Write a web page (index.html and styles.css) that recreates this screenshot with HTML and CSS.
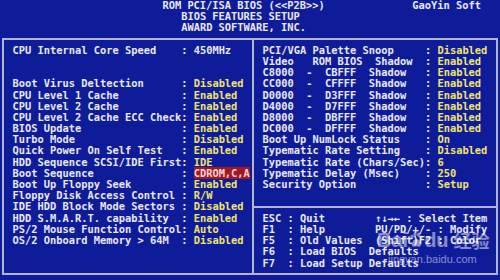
FILE: index.html
```html
<!DOCTYPE html>
<html lang="en">
<head>
  <meta charset="UTF-8">
  <title>BIOS Features Setup</title>
  <link rel="stylesheet" href="styles.css">
</head>
<body>
  <div class="screen">

    <header class="heading">
      <div class="line"><span class="heading-title">ROM PCI/ISA BIOS (&lt;&lt;P2B&gt;&gt;)</span><span class="heading-brand">GaoYin Soft</span></div>
      <div class="line heading-sub">BIOS FEATURES SETUP</div>
      <div class="line heading-sub">AWARD SOFTWARE, INC.</div>
    </header>

    <main class="frame">
      <!-- left column -->
      <section class="panel panel-left">
        <div class="line"><span class="label">CPU Internal Core Speed</span>: <span class="plain">450MHz</span></div>
        <div class="line"></div>
        <div class="line"></div>
        <div class="line"><span class="label">Boot Virus Deltection</span>: <span class="value">Disabled</span></div>
        <div class="line"><span class="label">CPU Level 1 Cache</span>: <span class="value">Enabled</span></div>
        <div class="line"><span class="label">CPU Level 2 Cache</span>: <span class="value">Enabled</span></div>
        <div class="line"><span class="label">CPU Level 2 Cache ECC Check</span>: <span class="value">Enabled</span></div>
        <div class="line"><span class="label">BIOS Update</span>: <span class="value">Enabled</span></div>
        <div class="line"><span class="label">Turbo Mode</span>: <span class="value">Disabled</span></div>
        <div class="line"><span class="label">Quick Power On Self Test</span>: <span class="value">Enabled</span></div>
        <div class="line"><span class="label">HDD Sequence SCSI/IDE First</span>: <span class="value">IDE</span></div>
        <div class="line"><span class="label">Boot Sequence</span>: <span class="value selected">CDROM,C,A</span></div>
        <div class="line"><span class="label">Boot Up Floppy Seek</span>: <span class="value">Enabled</span></div>
        <div class="line"><span class="label">Floppy Disk Access Control</span>: <span class="value">R/W</span></div>
        <div class="line"><span class="label">IDE HDD Block Mode Sectors</span>: <span class="value">Disabled</span></div>
        <div class="line"><span class="label">HDD S.M.A.R.T. capability</span>: <span class="value">Enabled</span></div>
        <div class="line"><span class="label">PS/2 Mouse Function Control</span>: <span class="value">Auto</span></div>
        <div class="line"><span class="label">OS/2 Onboard Memory &gt; 64M</span>: <span class="value">Disabled</span></div>
      </section>

      <!-- right column -->
      <section class="panel panel-right">
        <div class="settings">
          <div class="line"><span class="label label-wide">PCI/VGA Palette Snoop</span>: <span class="value">Disabled</span></div>
          <div class="line"><span class="label label-wide">Video   ROM BIOS  Shadow</span>: <span class="value">Enabled</span></div>
          <div class="line"><span class="label label-wide">C8000  -  CBFFF  Shadow</span>: <span class="value">Enabled</span></div>
          <div class="line"><span class="label label-wide">CC000  -  CFFFF  Shadow</span>: <span class="value">Enabled</span></div>
          <div class="line"><span class="label label-wide">D0000  -  D3FFF  Shadow</span>: <span class="value">Enabled</span></div>
          <div class="line"><span class="label label-wide">D4000  -  D7FFF  Shadow</span>: <span class="value">Enabled</span></div>
          <div class="line"><span class="label label-wide">D8000  -  DBFFF  Shadow</span>: <span class="value">Enabled</span></div>
          <div class="line"><span class="label label-wide">DC000  -  DFFFF  Shadow</span>: <span class="value">Enabled</span></div>
          <div class="line"><span class="label label-wide">Boot Up NumLock Status</span>: <span class="value">On</span></div>
          <div class="line"><span class="label label-wide">Typematic Rate Setting</span>: <span class="value">Disabled</span></div>
          <div class="line"><span class="label label-wide">Typematic Rate (Chars/Sec)</span>: <span class="value">6</span></div>
          <div class="line"><span class="label label-wide">Typematic Delay (Msec)</span>: <span class="value">250</span></div>
          <div class="line"><span class="label label-wide">Security Option</span>: <span class="value">Setup</span></div>
        </div>
        <div class="keys">
          <div class="line">ESC : Quit        ↑↓→← : Select Item</div>
          <div class="line">F1  : Help        PU/PD/+/- : Modify</div>
          <div class="line">F5  : Old Values  (Shift)F2 : Color</div>
          <div class="line">F6  : Load BIOS  Defaults</div>
          <div class="line">F7  : Load Setup Defaults</div>
        </div>
      </section>
    </main>

    <!-- site watermark over the photo -->
    <div class="watermark">
      <div class="wm-logo">
        <span>Bai</span>
        <svg class="wm-paw" width="14" height="16" viewBox="0 0 14 16">
          <ellipse cx="3" cy="5" rx="1.6" ry="2.2"/>
          <ellipse cx="6" cy="2.4" rx="1.6" ry="2.2"/>
          <ellipse cx="9.6" cy="2.6" rx="1.6" ry="2.2"/>
          <ellipse cx="12" cy="5.6" rx="1.5" ry="2"/>
          <path d="M7.5 7 C4.5 7 2.5 11 2.8 13 C3.1 15 5 15 7.4 14.2 C9.8 15 11.8 15 12.1 13 C12.4 11 10.4 7 7.5 7 Z"/>
        </svg>
        <span>du</span>
        <span class="wm-cn">经验</span>
      </div>
      <div class="wm-url">jingyan.baidu.com</div>
    </div>

  </div>
</body>
</html>
```

FILE: styles.css
```css
body {
  margin: 0;
  background: #0f1c9a;
}

.screen {
  position: relative;
  width: 500px;
  height: 280px;
  overflow: hidden;
  background: #0f1c9a;
  color: #e9e9f2;
  font-family: "DejaVu Sans Mono", "Liberation Mono", monospace;
  font-weight: bold;
  font-size: 10.38px;
}

.line {
  height: 11.2px;
  line-height: 11.2px;
  white-space: pre;
}

/* title rows */
.heading-title {
  padding-left: 26ch;
}

.heading-brand {
  padding-left: 14ch;
}

.heading-sub {
  padding-left: 29ch;
}

/* the box */
.frame {
  box-sizing: border-box;
  display: flex;
  width: 496px;
  height: 237px;
  margin: 4.4px 2px 0;
  border: 2px solid #b3b5cf;
}

.panel {
  box-sizing: border-box;
}

.panel-left {
  width: 250px;
  padding: 4.8px 0 0 8.5px;
  border-right: 2px solid #b3b5cf;
}

.panel-right {
  flex: 1;
  display: flex;
  flex-direction: column;
}

.settings {
  box-sizing: border-box;
  height: 166px;
  padding: 4.8px 0 0 8.5px;
}

.keys {
  flex: 1;
  padding: 4.8px 0 0 8.5px;
  border-top: 2px solid #b3b5cf;
}

.label {
  display: inline-block;
  width: 27ch;
}

.label-wide {
  width: 26ch;
}

.value {
  color: #f1e46c;
}

.selected {
  background: #a3181e;
  color: #f6d6d6;
}

/* watermark */
.watermark {
  position: absolute;
  left: 377px;
  top: 228px;
  color: rgba(255, 255, 255, 0.5);
  font-family: "Liberation Sans", Arial, sans-serif;
}

.wm-logo {
  display: flex;
  align-items: center;
  gap: 1px;
  font-size: 20px;
  font-weight: bold;
  line-height: 24px;
}

.wm-paw {
  fill: rgba(255, 255, 255, 0.5);
}

.wm-cn {
  margin-left: 4px;
  font-family: "Noto Sans CJK SC", sans-serif;
  font-size: 18px;
}

.wm-url {
  margin: 1px 0 0 11px;
  font-size: 11px;
  font-weight: normal;
  line-height: 13px;
}
```
